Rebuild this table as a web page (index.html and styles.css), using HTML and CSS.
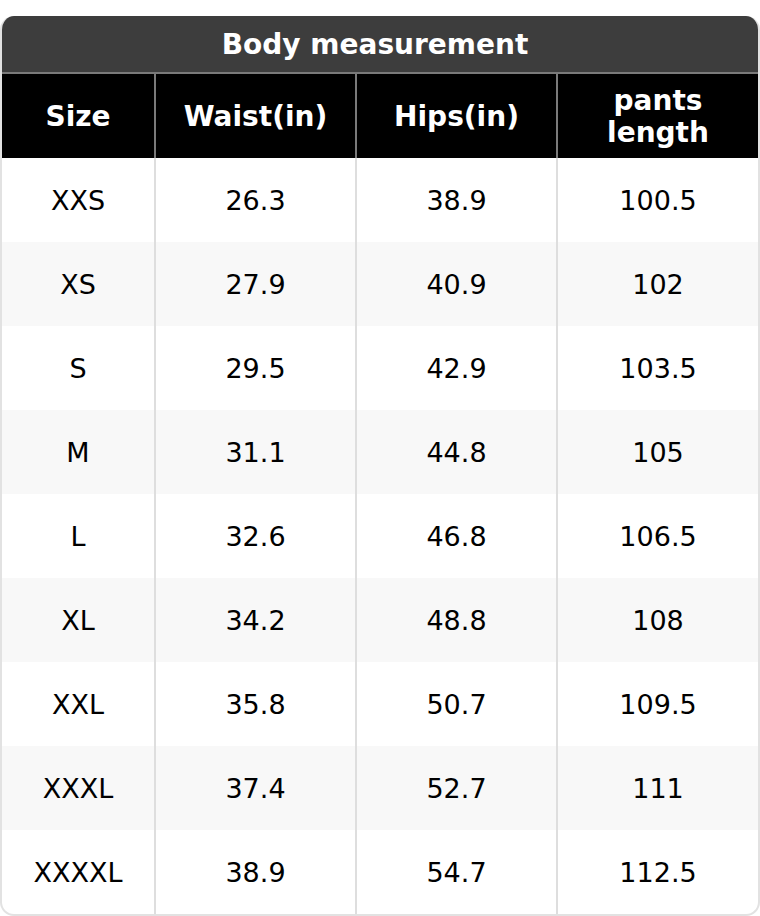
FILE: index.html
```html
<!DOCTYPE html>
<html>
<head>
<meta charset="utf-8">
<link rel="stylesheet" href="styles.css">
</head>
<body>
<div class="chart">
  <div class="title">Body measurement</div>
  <table class="sizes">
    <thead>
      <tr><th>Size</th><th>Waist(in)</th><th>Hips(in)</th><th>pants<br>length</th></tr>
    </thead>
    <tbody>
      <tr><td>XXS</td><td>26.3</td><td>38.9</td><td>100.5</td></tr>
      <tr><td>XS</td><td>27.9</td><td>40.9</td><td>102</td></tr>
      <tr><td>S</td><td>29.5</td><td>42.9</td><td>103.5</td></tr>
      <tr><td>M</td><td>31.1</td><td>44.8</td><td>105</td></tr>
      <tr><td>L</td><td>32.6</td><td>46.8</td><td>106.5</td></tr>
      <tr><td>XL</td><td>34.2</td><td>48.8</td><td>108</td></tr>
      <tr><td>XXL</td><td>35.8</td><td>50.7</td><td>109.5</td></tr>
      <tr><td>XXXL</td><td>37.4</td><td>52.7</td><td>111</td></tr>
      <tr><td>XXXXL</td><td>38.9</td><td>54.7</td><td>112.5</td></tr>
    </tbody>
  </table>
</div>
</body>
</html>
```
FILE: styles.css
```css
html, body {
  margin: 0;
  padding: 0;
  background: #ffffff;
}
body {
  padding-top: 16px;
  font-family: "DejaVu Sans", sans-serif;
}
.chart {
  width: 760px;
  box-sizing: border-box;
  border: 2px solid #e2e2e2;
  border-top: none;
  border-radius: 14px;
  overflow: hidden;
  background: #fff;
}
.title {
  height: 56px;
  margin: 0 -2px;
  padding-right: 10px;
  background: #3d3d3d;
  color: #fff;
  font-weight: bold;
  font-size: 28px;
  line-height: 58px;
  text-align: center;
  border-bottom: 2px solid #7a7a7a;
}
.sizes {
  width: 100%;
  border-collapse: separate;
  border-spacing: 0;
  table-layout: fixed;
}
.sizes th, .sizes td {
  padding: 0;
  text-align: center;
  vertical-align: middle;
  height: 84px;
  box-sizing: border-box;
}
.sizes th {
  background: #000;
  color: #fff;
  font-weight: bold;
  font-size: 28px;
  line-height: 32px;
  padding-top: 2px;
  border-left: 2px solid #7a7a7a;
}
.sizes td {
  color: #000;
  font-size: 27px;
  border-left: 2px solid #dedede;
}
.sizes th:first-child, .sizes td:first-child {
  border-left: none;
  width: 152px;
}
.sizes th:nth-child(2), .sizes th:nth-child(3) {
  width: 201px;
}
.sizes tbody tr:nth-child(even) td {
  background: #f8f8f8;
}
```
